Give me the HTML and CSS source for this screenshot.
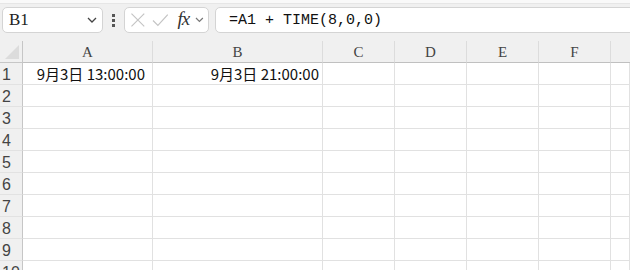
FILE: index.html
```html
<!DOCTYPE html>
<html lang="zh-CN">
<head>
    <meta charset="UTF-8" />
    <title>Sheet1</title>
    <link rel="stylesheet" href="styles.css">
</head>
<body>
    <div class="topline"></div>
    <div class="toolbar">
        <div class="namebox">
            <span class="cellref">B1</span>
            <svg class="chev" width="10" height="6" viewBox="0 0 10 6"><path d="M1 1 L5 5 L9 1" fill="none" stroke="#444" stroke-width="1.3"/></svg>
        </div>
        <div class="dots"><i></i><i></i><i></i></div>
        <div class="fxbox">
            <svg width="16" height="16" viewBox="0 0 16 16"><path d="M1.5 1.5 L14.5 14.5 M14.5 1.5 L1.5 14.5" stroke="#c4c4c4" stroke-width="1.2"/></svg>
            <svg width="17" height="16" viewBox="0 0 17 16"><path d="M1 8.5 L6 13.5 L16 2.5" fill="none" stroke="#c4c4c4" stroke-width="1.2"/></svg>
            <span class="fx">fx</span>
            <svg class="chev" width="9" height="6" viewBox="0 0 9 6"><path d="M1 1 L4.5 4.5 L8 1" fill="none" stroke="#777" stroke-width="1.2"/></svg>
        </div>
        <div class="formula">=A1 + TIME(8,0,0)</div>
    </div>

    <div class="sheet">
        <div class="corner"><span class="tri"></span></div>
        <div class="colhead">A</div>
        <div class="colhead">B</div>
        <div class="colhead">C</div>
        <div class="colhead">D</div>
        <div class="colhead">E</div>
        <div class="colhead">F</div>
        <div class="colhead last"></div>

        <div class="rowhead">1</div>
        <div class="cell num cell-a">9月3日 13:00:00</div>
        <div class="cell num">9月3日 21:00:00</div>
        <div class="cell"></div><div class="cell"></div><div class="cell"></div><div class="cell"></div><div class="cell"></div>

        <div class="rowhead">2</div>
        <div class="cell"></div><div class="cell"></div><div class="cell"></div><div class="cell"></div><div class="cell"></div><div class="cell"></div><div class="cell"></div>
        <div class="rowhead">3</div>
        <div class="cell"></div><div class="cell"></div><div class="cell"></div><div class="cell"></div><div class="cell"></div><div class="cell"></div><div class="cell"></div>
        <div class="rowhead">4</div>
        <div class="cell"></div><div class="cell"></div><div class="cell"></div><div class="cell"></div><div class="cell"></div><div class="cell"></div><div class="cell"></div>
        <div class="rowhead">5</div>
        <div class="cell"></div><div class="cell"></div><div class="cell"></div><div class="cell"></div><div class="cell"></div><div class="cell"></div><div class="cell"></div>
        <div class="rowhead">6</div>
        <div class="cell"></div><div class="cell"></div><div class="cell"></div><div class="cell"></div><div class="cell"></div><div class="cell"></div><div class="cell"></div>
        <div class="rowhead">7</div>
        <div class="cell"></div><div class="cell"></div><div class="cell"></div><div class="cell"></div><div class="cell"></div><div class="cell"></div><div class="cell"></div>
        <div class="rowhead">8</div>
        <div class="cell"></div><div class="cell"></div><div class="cell"></div><div class="cell"></div><div class="cell"></div><div class="cell"></div><div class="cell"></div>
        <div class="rowhead">9</div>
        <div class="cell"></div><div class="cell"></div><div class="cell"></div><div class="cell"></div><div class="cell"></div><div class="cell"></div><div class="cell"></div>
        <div class="rowhead">10</div>
        <div class="cell"></div><div class="cell"></div><div class="cell"></div><div class="cell"></div><div class="cell"></div><div class="cell"></div><div class="cell"></div>
    </div>
</body>
</html>
```

FILE: styles.css
```css
body {
    margin: 0;
    width: 630px;
    height: 270px;
    overflow: hidden;
    background: #f0f0f0;
    font-family: "Noto Sans CJK SC", "Noto Sans", sans-serif;
}
.topline {
    height: 3px;
    background: #f9f9f9;
    border-bottom: 1px solid #e6e6e6;
}
.toolbar {
    display: flex;
    align-items: flex-start;
    height: 37px;
    padding: 3px 0 0 2px;
    box-sizing: border-box;
}
.namebox, .fxbox, .formula {
    height: 26px;
    box-sizing: border-box;
    background: #fff;
    border: 1px solid #d4d4d4;
    border-radius: 5px;
    display: flex;
    align-items: center;
}
.namebox {
    width: 101px;
    padding: 0 5px 0 6px;
    justify-content: space-between;
}
.cellref {
    font-family: "Liberation Serif", serif;
    font-size: 17px;
    color: #222;
}
.dots {
    width: 21px;
    height: 26px;
    display: flex;
    flex-direction: column;
    justify-content: center;
    align-items: center;
    gap: 2px;
}
.dots i {
    width: 3px;
    height: 3px;
    background: #555;
}
.fxbox {
    width: 85px;
    padding: 0 4px 0 5px;
    gap: 6px;
}
.fx {
    font-family: "Liberation Serif", serif;
    font-style: italic;
    font-size: 19px;
    color: #333;
    margin-left: 3px;
    margin-top: -3px;
    letter-spacing: -1px;
}
.formula {
    margin-left: 6px;
    flex: 1;
    margin-right: -10px;
    padding-left: 13px;
    font-family: "Liberation Mono", monospace;
    font-size: 15px;
    color: #111;
}
.sheet {
    display: grid;
    grid-template-columns: 23px 130px 170px 72px 72px 72px 72px 1fr;
    grid-auto-rows: 22px;
}
.corner {
    position: relative;
    border-right: 1px solid #c6c6c6;
    border-bottom: 1px solid #c6c6c6;
}
.tri {
    position: absolute;
    right: 3px;
    bottom: 3px;
    width: 0;
    height: 0;
    border-left: 14px solid transparent;
    border-bottom: 14px solid #dcdcdc;
}
.colhead {
    border-right: 1px solid #dcdcdc;
    border-bottom: 1px solid #c0c0c0;
    text-align: center;
    font-family: "Liberation Serif", serif;
    font-size: 15px;
    line-height: 23px;
    color: #444;
}
.colhead.last {
    border-right: none;
}
.rowhead {
    border-right: 1px solid #c6c6c6;
    border-bottom: 1px solid #e2e2e2;
    padding-left: 2px;
    font-family: "Liberation Sans", sans-serif;
    font-size: 16px;
    line-height: 23px;
    color: #444;
    white-space: nowrap;
}
.cell {
    background: #fff;
    border-right: 1px solid #e1e1e1;
    border-bottom: 1px solid #e1e1e1;
    font-size: 15px;
    line-height: 21px;
    color: #111;
    white-space: nowrap;
}
.num {
    text-align: right;
    padding-right: 3px;
}
.cell-a {
    padding-right: 7px;
}
```
